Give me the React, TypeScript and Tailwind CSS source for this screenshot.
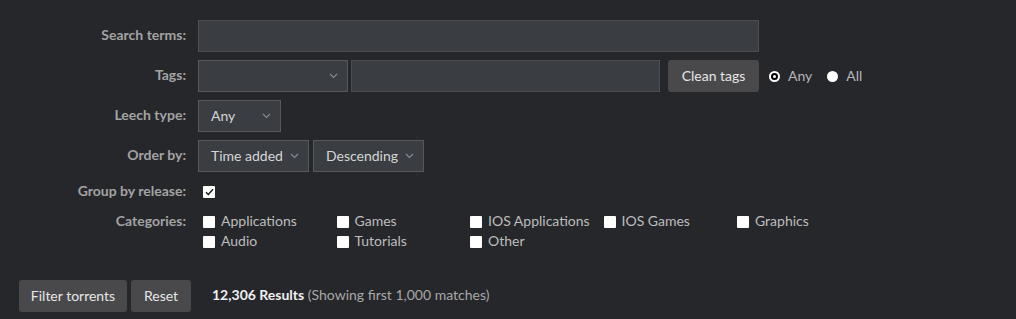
import React from "react";

const categories = [
  ["Applications", "Games", "IOS Applications", "IOS Games", "Graphics"],
  ["Audio", "Tutorials", "Other"],
];

const Chevron = () => (
  <svg width="9" height="6" viewBox="0 0 9 6" className="absolute right-[9px] top-1/2 -translate-y-1/2 text-[#8a8c90]">
    <path d="M1 1l3.5 3.5L8 1" fill="none" stroke="currentColor" strokeWidth="1.1" />
  </svg>
);

const Select = ({ value, width }: { value: string; width: string }) => (
  <div className={`relative h-[32px] ${width} border border-[#55585d] bg-[#3a3d42] text-[14px] text-[#d6d6d6] flex items-center pl-[12px] pb-[2px]`}>
    {value}
    <Chevron />
  </div>
);

const Box = ({ checked }: { checked?: boolean }) => (
  <span className="w-[12px] h-[12px] bg-white rounded-[1px] flex items-center justify-center shrink-0">
    {checked && (
      <svg width="9" height="8" viewBox="0 0 9 8">
        <path d="M1 4.2l2.3 2.3L8 1.2" fill="none" stroke="#111" strokeWidth="1.3" />
      </svg>
    )}
  </span>
);

const Label = ({ children }: { children: React.ReactNode }) => (
  <div className="w-[186px] shrink-0 text-right text-[14px] font-bold text-[#a3a3a3] pb-[3px]">{children}</div>
);

export default function App() {
  return (
    <div className="w-[1016px] h-[319px] bg-[#26272b] pt-[20px] font-['Lato',sans-serif] overflow-hidden">
      <div className="flex flex-col">
        {/* search */}
        <div className="flex items-center gap-[12px] h-[32px]">
          <Label>Search terms:</Label>
          <div className="h-[32px] w-[561px] border border-[#4b4e53] bg-[#3a3d42]" />
        </div>

        {/* tags */}
        <div className="flex items-center gap-[12px] h-[32px] mt-[8px]">
          <Label>Tags:</Label>
          <div className="flex items-center">
            <Select value="" width="w-[150px]" />
            <div className="ml-[3px] h-[32px] w-[309px] border border-[#4b4e53] bg-[#3a3d42]" />
            <button className="ml-[8px] h-[32px] w-[91px] rounded-[3px] bg-[#49494c] text-[14px] text-[#e6e6e6] pb-[2px]">
              Clean tags
            </button>
            <label className="ml-[10px] flex items-center gap-[8px] text-[14px] text-[#b5b5b5]">
              <span className="w-[11px] h-[11px] rounded-full bg-white p-[2px]">
                <span className="block w-full h-full rounded-full border-[2px] border-black bg-white" />
              </span>
              <span className="pb-[2px]">Any</span>
            </label>
            <label className="ml-[15px] flex items-center gap-[8px] text-[14px] text-[#b5b5b5]">
              <span className="w-[11px] h-[11px] rounded-full bg-white" />
              <span className="pb-[2px]">All</span>
            </label>
          </div>
        </div>

        {/* leech */}
        <div className="flex items-center gap-[12px] h-[32px] mt-[8px]">
          <Label>Leech type:</Label>
          <Select value="Any" width="w-[83px]" />
        </div>

        {/* order */}
        <div className="flex items-center gap-[12px] h-[32px] mt-[8px]">
          <Label>Order by:</Label>
          <div className="flex gap-[4px]">
            <Select value="Time added" width="w-[111px]" />
            <Select value="Descending" width="w-[111px]" />
          </div>
        </div>

        {/* group */}
        <div className="flex items-center gap-[12px] h-[20px] mt-[10px]">
          <Label>Group by release:</Label>
          <span className="ml-[5px]">
            <Box checked />
          </span>
        </div>

        {/* categories */}
        <div className="flex gap-[12px] mt-[10px]">
          <div className="leading-[20px] -mt-[1px]">
            <Label>Categories:</Label>
          </div>
          <div className="flex flex-col ml-[5px]">
            {categories.map((row, i) => (
              <div key={i} className="flex h-[20px]">
                {row.map((c) => (
                  <label key={c} className="w-[133.5px] flex items-center gap-[6px] text-[14px] text-[#bdbdbd]">
                    <Box />
                    <span className="pb-[3px]">{c}</span>
                  </label>
                ))}
              </div>
            ))}
          </div>
        </div>

        {/* actions */}
        <div className="flex items-center mt-[28px] pl-[19px]">
          <button className="h-[32px] w-[108px] rounded-[3px] bg-[#49494c] text-[14px] text-[#e6e6e6] pb-[2px]">
            Filter torrents
          </button>
          <button className="ml-[4px] h-[32px] w-[60px] rounded-[3px] bg-[#49494c] text-[14px] text-[#e6e6e6] pb-[2px]">
            Reset
          </button>
          <div className="ml-[21px] text-[14px] text-[#a8a8a8] pb-[3px]">
            <span className="font-bold text-[#f0f0f0]">12,306 Results</span> (Showing first 1,000 matches)
          </div>
        </div>
      </div>
    </div>
  );
}
